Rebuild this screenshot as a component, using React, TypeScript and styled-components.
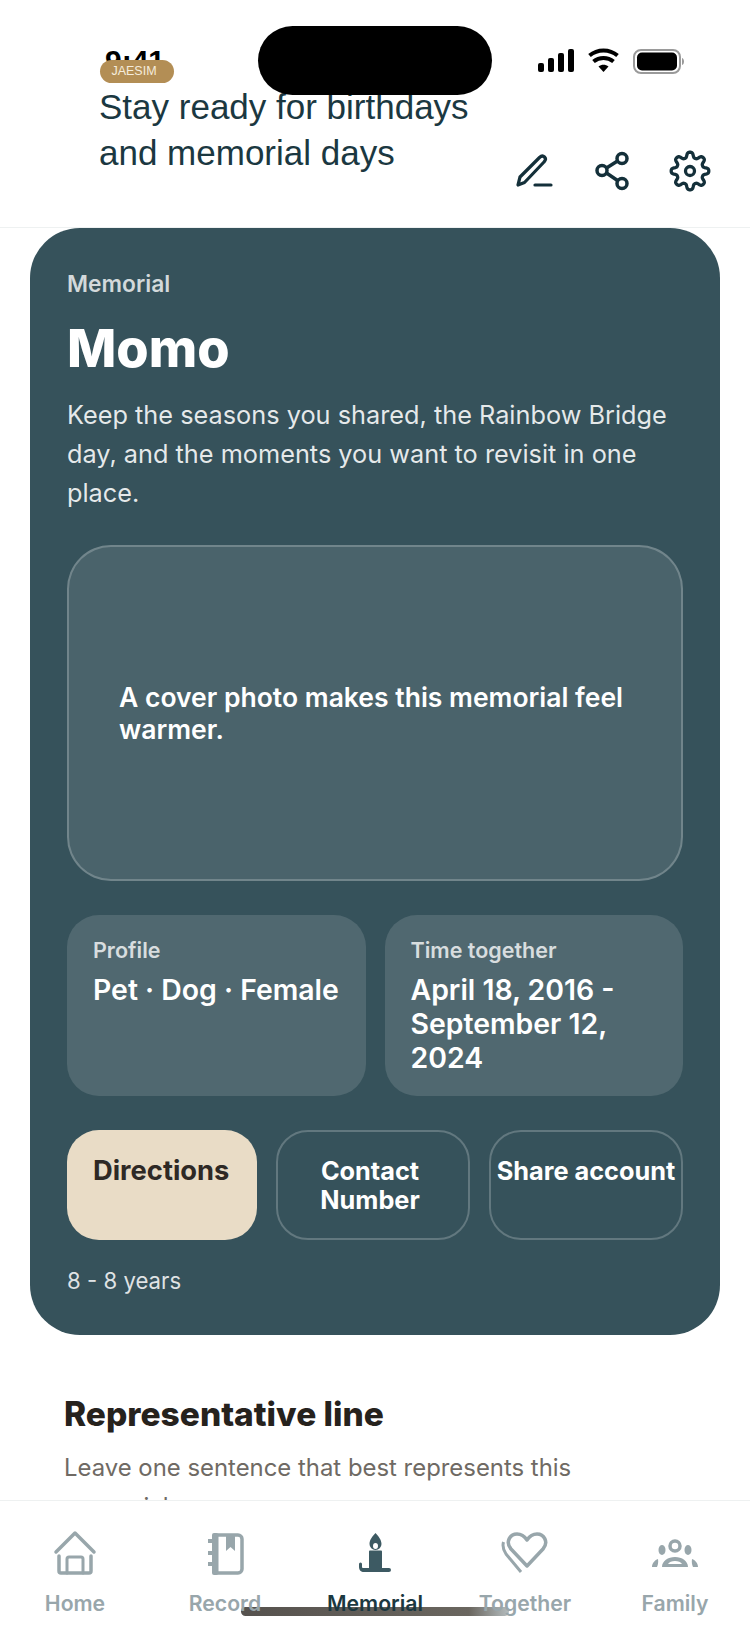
import React from "react";
import styled, { createGlobalStyle } from "styled-components";

const Global = createGlobalStyle`
  html, body { margin: 0; padding: 0; background: #fff; }
  * { box-sizing: border-box; }
  #root { width: 750px; height: 1631px; }
`;

const Screen = styled.div`
  position: relative;
  width: 750px;
  height: 1631px;
  overflow: hidden;
  display: flex;
  flex-direction: column;
  background: #fff;
  font-family: Inter, "Liberation Sans", sans-serif;
`;

const StatusTime = styled.div`
  position: absolute;
  left: 105px;
  top: 43px;
  font: 700 30px/36px "Liberation Sans", sans-serif;
  color: #000;
`;
const Island = styled.div`
  position: absolute;
  left: 258px;
  top: 26px;
  width: 234px;
  height: 69px;
  border-radius: 35px;
  background: #000;
`;
const StatusIcons = styled.svg`
  position: absolute;
  left: 530px;
  top: 44px;
`;

const Header = styled.header`
  flex: none;
  height: 228px;
  display: flex;
  justify-content: space-between;
  align-items: flex-end;
  padding: 60px 38px 34px 100px;
  border-bottom: 1px solid #eef1f1;
`;
const HeaderText = styled.div`
  align-self: flex-start;
  position: relative;
  display: flex;
  flex-direction: column;
  align-items: flex-start;
`;
const Badge = styled.span`
  width: 74px;
  height: 23px;
  border-radius: 12px;
  background: #b38e55;
  color: #f5ecdc;
  font: 400 12.5px/23px "Liberation Sans", sans-serif;
  text-align: center;
  padding-right: 6px;
`;
const Title = styled.h1`
  margin: 1px 0 0 -1px;
  font: 400 35px/46px "Liberation Sans", sans-serif;
  color: #1b3841;
  white-space: nowrap;
`;
const Actions = styled.div`
  display: flex;
  gap: 34px;
`;
const IconButton = styled.div`
  width: 44px;
  height: 44px;
  display: flex;
  align-items: center;
  justify-content: center;
  color: #14303a;
`;

const Content = styled.main`
  flex: 1;
  min-height: 0;
  overflow: hidden;
`;
const Card = styled.section`
  margin: 0 30px;
  height: 1107px;
  padding: 43px 37px 0;
  border-radius: 50px;
  background: #36525b;
  color: #fff;
`;
const Eyebrow = styled.div`
  font-size: 22.8px;
  line-height: 26px;
  font-weight: 600;
  color: rgba(255, 255, 255, 0.78);
`;
const Name = styled.h2`
  margin: 19px 0 0;
  font-size: 52.3px;
  line-height: 64px;
  font-weight: 800;
`;
const Desc = styled.p`
  margin: 15px 0 0;
  font-size: 25.3px;
  line-height: 39px;
  color: rgba(255, 255, 255, 0.88);
`;
const Cover = styled.div`
  margin-top: 33px;
  height: 336px;
  border: 2px solid rgba(255, 255, 255, 0.22);
  border-radius: 44px;
  background: rgba(255, 255, 255, 0.1);
  display: flex;
  align-items: center;
  padding: 0 50px;
  font-size: 26.5px;
  line-height: 32px;
  font-weight: 600;
`;
const Stats = styled.div`
  margin-top: 34px;
  display: grid;
  grid-template-columns: 1fr 1fr;
  gap: 19px;
`;
const Stat = styled.div`
  height: 181px;
  padding: 23px 26px;
  border-radius: 32px;
  background: rgba(255, 255, 255, 0.13);
`;
const StatLabel = styled.div`
  font-size: 21.5px;
  line-height: 24px;
  font-weight: 600;
  color: rgba(255, 255, 255, 0.78);
`;
const StatValue = styled.div`
  margin-top: 11px;
  font-size: 28.4px;
  line-height: 34px;
  font-weight: 600;
`;
const Buttons = styled.div`
  margin-top: 34px;
  display: grid;
  grid-template-columns: 190px 1fr 1fr;
  gap: 19px;
`;
const ActionButton = styled.div<{ $primary?: boolean; $wide?: boolean }>`
  height: 110px;
  border-radius: 32px;
  padding: ${(p) =>
    p.$primary ? "26px 26px" : p.$wide ? "24px 5px" : "24px 11px 24px 5px"};
  text-align: ${(p) => (p.$primary ? "left" : "center")};
  font-size: ${(p) => (p.$primary ? 27.3 : 25.3)}px;
  line-height: 29px;
  font-weight: 700;
  background: ${(p) => (p.$primary ? "#e9dcc6" : "transparent")};
  color: ${(p) => (p.$primary ? "#2e2925" : "#fff")};
  border: ${(p) => (p.$primary ? "none" : "2px solid rgba(255,255,255,0.22)")};
  white-space: pre-line;
`;
const Years = styled.div`
  margin-top: 27px;
  font-size: 22.2px;
  line-height: 28px;
  color: rgba(255, 255, 255, 0.85);
`;

const Section = styled.section`
  padding: 58px 64px 0;
`;
const SectionTitle = styled.h3`
  margin: 0;
  font-size: 33.5px;
  line-height: 42px;
  font-weight: 800;
  color: #26221d;
`;
const SectionText = styled.p`
  margin: 13px 0 0;
  max-width: 540px;
  font-size: 23.9px;
  line-height: 39px;
  color: #6f6a64;
`;

const TabBar = styled.nav`
  flex: none;
  height: 131px;
  border-top: 1px solid #eef1f1;
  background: #fff;
  display: grid;
  grid-template-columns: repeat(5, 150px);
  padding-top: 28px;
`;
const Tab = styled.div<{ $active?: boolean }>`
  display: flex;
  flex-direction: column;
  align-items: center;
  gap: 13px;
  color: ${(p) => (p.$active ? "#3d5a63" : "#98a6ab")};
`;
const TabLabel = styled.span<{ $active?: boolean }>`
  position: relative;
  z-index: 2;
  font-size: 21.2px;
  line-height: 26px;
  font-weight: 600;
  color: ${(p) => (p.$active ? "#1b3841" : "#98a6ab")};
`;
const HomeIndicator = styled.div`
  position: absolute;
  left: 241px;
  top: 1607px;
  width: 268px;
  height: 9px;
  border-radius: 5px;
  background: linear-gradient(90deg, #56524e 0%, #6a665f 85%, #b4bcbe 100%);
`;

const HomeIcon = () => (
  <svg width="48" height="48" viewBox="0 0 48 48" fill="none" stroke="currentColor" strokeWidth="3.5" strokeLinecap="round" strokeLinejoin="round">
    <path d="M5 23 24 4l19 19" />
    <path d="M8 27v15a2 2 0 0 0 2 2h28a2 2 0 0 0 2-2V27" />
    <path d="M16 44V30a2 2 0 0 1 2-2h12a2 2 0 0 1 2 2v14" strokeWidth="3" />
  </svg>
);
const RecordIcon = () => (
  <svg width="48" height="48" viewBox="0 0 48 48" fill="none">
    <rect x="13" y="6" width="28" height="38" rx="4" stroke="currentColor" strokeWidth="3.5" />
    <rect x="11" y="4" width="6.500" height="42" rx="2" fill="currentColor" />
    <path d="M25 5h9v17l-4.500-4-4.500 4z" fill="currentColor" />
    <path d="M7 10h6v4H7zM7 22h6v4H7zM7 33h6v4H7z" fill="currentColor" />
  </svg>
);
const CandleIcon = () => (
  <svg width="48" height="48" viewBox="0 0 48 48" fill="none">
    <path fillRule="evenodd" fill="currentColor" d="M24.500 4c3 3 6 7 6 11a6 6 0 0 1-12 0c0-4 3-8 6-11Zm0 10a2.500 3 0 1 0 0 6 2.500 3 0 0 0 0-6Z" />
    <path fill="currentColor" d="M18 22.500c0-.5.5-1 1-1h11c.5 0 1 .5 1 1V39h7a1.500 1.500 0 0 1 0 4H13c-3 0-5-2-5-5v-3a1.500 1.500 0 0 1 3 0v3c0 .7.5 1 1.500 1H18Z" />
  </svg>
);
const HeartIcon = () => (
  <svg width="48" height="48" viewBox="0 0 48 48" fill="none" stroke="currentColor" strokeLinecap="butt" strokeLinejoin="round">
    <path strokeWidth="3.500" d="M26 37 10 20C4 13 9 5 16 5c5 0 8 3 10 6 2-3 5-6 10-6 7 0 12 8 6 15Z" />
    <path strokeWidth="3" d="M2.500 13C1 18 3 22 5 25l15 18" />
  </svg>
);
const FamilyIcon = () => (
  <svg width="48" height="48" viewBox="0 0 48 48" fill="none">
    <circle cx="24" cy="17" r="5" stroke="currentColor" strokeWidth="3.500" />
    <ellipse cx="11" cy="21" rx="3.500" ry="5" fill="currentColor" />
    <ellipse cx="37" cy="21" rx="3.500" ry="5" fill="currentColor" />
    <path fillRule="evenodd" fill="currentColor" d="M11 38c0-6 6-10 13-10s13 4 13 10Zm6-3h14c-1-2-4-3-7-3s-6 1-7 3Z" />
    <path fill="currentColor" d="M1 38c0-4 3-7 6-8 .5 3 0 6-1 8ZM47 38c0-4-3-7-6-8-.5 3 0 6 1 8Z" />
  </svg>
);

const gearPath = (() => {
  const pts: string[] = [];
  for (let i = 0; i < 160; i++) {
    const a = (i / 160) * Math.PI * 2;
    const w = Math.tanh(1.6 * Math.cos(8 * a)) / Math.tanh(1.6);
    const r = 16.2 + 2.6 * w;
    pts.push(`${(22 + r * Math.sin(a)).toFixed(2)} ${(22 - r * Math.cos(a)).toFixed(2)}`);
  }
  return `M${pts.join("L")}Z`;
})();

const tabs = [
  { label: "Home", icon: <HomeIcon /> },
  { label: "Record", icon: <RecordIcon /> },
  { label: "Memorial", icon: <CandleIcon />, active: true },
  { label: "Together", icon: <HeartIcon /> },
  { label: "Family", icon: <FamilyIcon /> },
];

export default function App() {
  return (
    <Screen>
      <Global />
      <Header>
        <StatusTime>9:41</StatusTime>
        <HeaderText>
          <Badge>JAESIM</Badge>
          <Title>
            Stay ready for birthdays
            <br />
            and memorial days
          </Title>
        </HeaderText>
        <Actions>
          <IconButton>
            <svg width="44" height="44" viewBox="0 0 44 44" fill="none" stroke="currentColor" strokeWidth="3.200" strokeLinecap="round" strokeLinejoin="round">
              <path d="M6 36l2-8L27.500 8.500c1.500-1.500 3.500-2 5-.5s1 3.500-.5 5L12.500 33.500 6 36Z" />
              <path d="M23 36h16" />
            </svg>
          </IconButton>
          <IconButton>
            <svg width="44" height="44" viewBox="0 0 44 44" fill="none" stroke="currentColor" strokeWidth="3.500">
              <circle cx="32" cy="9.500" r="5" />
              <circle cx="12" cy="21.500" r="5" />
              <circle cx="32" cy="34.500" r="5" />
              <path d="M16.500 19 27.500 12M16.500 24l11 7.500" />
            </svg>
          </IconButton>
          <IconButton>
            <svg width="44" height="44" viewBox="0 0 44 44" fill="none" stroke="currentColor" strokeWidth="3.300" strokeLinejoin="round">
              <path d={gearPath} />
              <circle cx="22" cy="22" r="4.500" />
            </svg>
          </IconButton>
        </Actions>
      </Header>
      <Content>
        <Card>
          <Eyebrow>Memorial</Eyebrow>
          <Name>Momo</Name>
          <Desc>Keep the seasons you shared, the Rainbow Bridge day, and the moments you want to revisit in one place.</Desc>
          <Cover>A cover photo makes this memorial feel warmer.</Cover>
          <Stats>
            <Stat>
              <StatLabel>Profile</StatLabel>
              <StatValue>Pet · Dog · Female</StatValue>
            </Stat>
            <Stat>
              <StatLabel>Time together</StatLabel>
              <StatValue>April 18, 2016 - September 12, 2024</StatValue>
            </Stat>
          </Stats>
          <Buttons>
            <ActionButton $primary>Directions</ActionButton>
            <ActionButton>{"Contact\nNumber"}</ActionButton>
            <ActionButton $wide>Share account</ActionButton>
          </Buttons>
          <Years>8 - 8 years</Years>
        </Card>
        <Section>
          <SectionTitle>Representative line</SectionTitle>
          <SectionText>Leave one sentence that best represents this memorial</SectionText>
        </Section>
      </Content>
      <TabBar>
        {tabs.map((t) => (
          <Tab key={t.label} $active={t.active}>
            {t.icon}
            <TabLabel $active={t.active}>{t.label}</TabLabel>
          </Tab>
        ))}
      </TabBar>
      <HomeIndicator />
      <Island />
      <StatusIcons width="160" height="34" viewBox="0 0 160 34" fill="none">
        <rect x="8" y="19" width="6" height="9" rx="2" fill="#000" />
        <rect x="18" y="14" width="6" height="14" rx="2" fill="#000" />
        <rect x="28" y="9" width="6" height="19" rx="2" fill="#000" />
        <rect x="38" y="5" width="6" height="23" rx="2" fill="#000" />
        <path d="M73.500 28l-5-5.500c3-2.400 7-2.400 10 0Z" fill="#000" />
        <path d="M63.500 17.500c5.800-4.800 14.200-4.800 20 0" stroke="#000" strokeWidth="4" />
        <path d="M59.500 11.500c8-6.800 20-6.800 28 0" stroke="#000" strokeWidth="4" />
        <rect x="104" y="6" width="46" height="23" rx="7" stroke="#9a9a9a" strokeWidth="2" />
        <rect x="107" y="8.500" width="40" height="18" rx="5" fill="#000" />
        <path d="M152 14c1.500.5 2 2 2 3.500s-.5 3-2 3.500Z" fill="#9a9a9a" />
      </StatusIcons>
    </Screen>
  );
}
